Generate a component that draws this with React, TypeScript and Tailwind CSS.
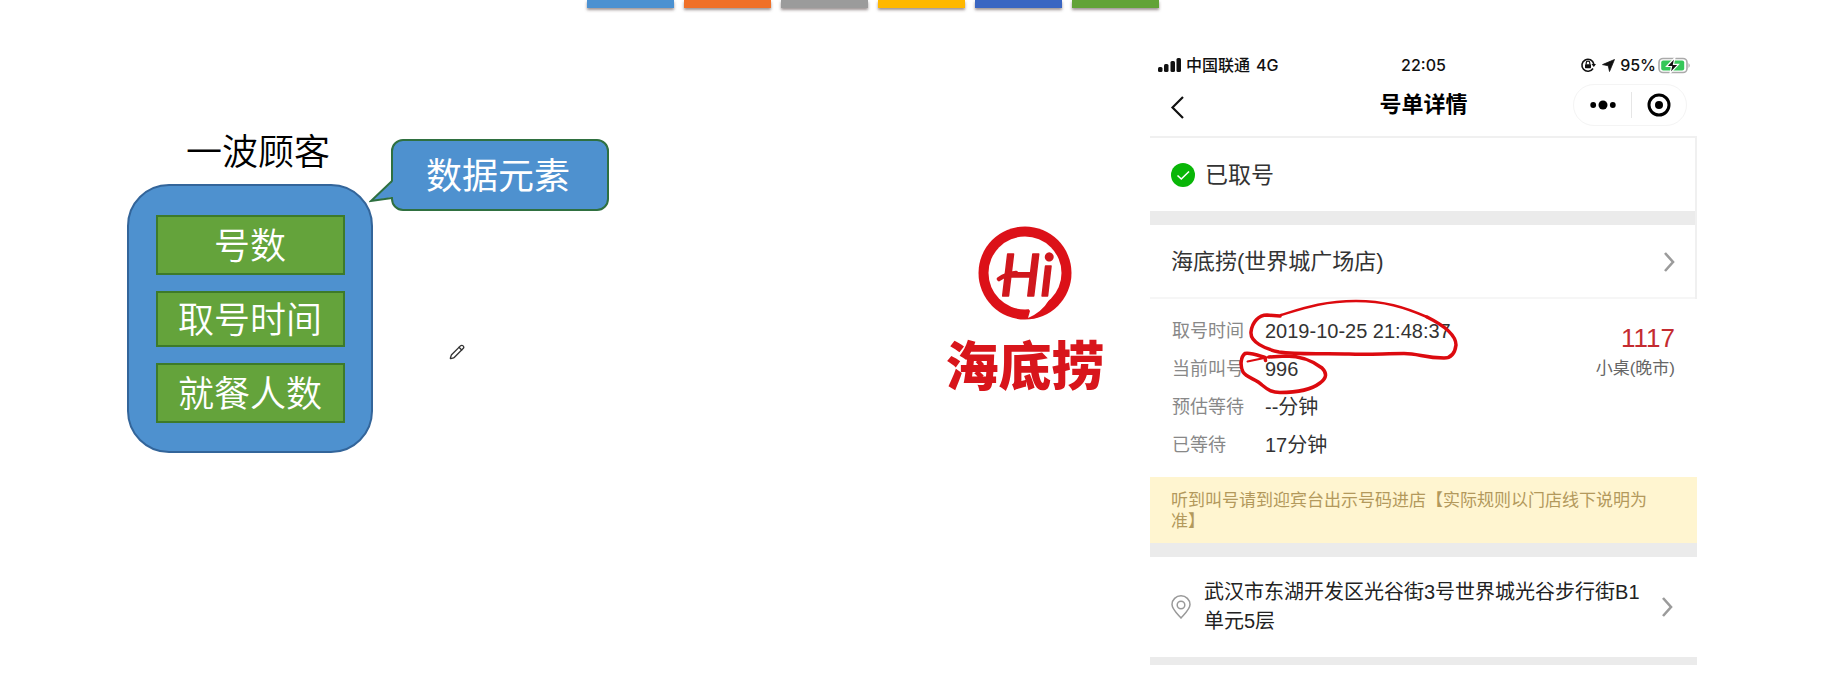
import React from "react";
import { Pencil } from "lucide-react";

const fields = [
  { name: "号数", height: "h-[60px]" },
  { name: "取号时间", height: "h-[56px]" },
  { name: "就餐人数", height: "h-[60px]" },
];

const details = [
  { label: "取号时间", value: "2019-10-25 21:48:37" },
  { label: "当前叫号", value: "996" },
  { label: "预估等待", value: "--分钟" },
  { label: "已等待", value: "17分钟" },
];

const tabColors = [
  "bg-[#4b91d1]",
  "bg-[#f07028]",
  "bg-[#9b9b9b]",
  "bg-[#ffb800]",
  "bg-[#3a66c2]",
  "bg-[#62a338]",
];

function ColorTabs() {
  return (
    <div className="flex gap-[10px] pl-[31.8%]">
      {tabColors.map((c) => (
        <div key={c} className={`h-2 w-[87px] shadow-[0_2px_3px_rgba(60,40,40,0.5)] ${c}`} />
      ))}
    </div>
  );
}

function Chevron() {
  return (
    <svg width="12" height="22" viewBox="0 0 12 22" fill="none" stroke="#9b9b9b" strokeWidth="2.6" className="shrink-0" aria-hidden="true">
      <path d="M2 2 L10 11 L2 20" />
    </svg>
  );
}

function ElementDiagram() {
  return (
    <section className="flex items-start pt-[115px] pl-[127px]">
      <div className="w-[246px]">
        <h2 className="pb-[9px] pl-4 text-center text-[36px] leading-[52px] font-[350] text-black">一波顾客</h2>
        <ul className="flex h-[269px] flex-col items-center gap-4 rounded-[42px] border-2 border-[#33659a] bg-[#4e91cf] pt-[29px]">
          {fields.map((f) => (
            <li
              key={f.name}
              className={`flex w-[189px] items-center justify-center border-2 border-[#3d7a2a] bg-[#64a33b] pb-1 text-[36px] leading-none font-[350] text-white ${f.height}`}
            >
              {f.name}
            </li>
          ))}
        </ul>
      </div>
      <div className="ml-[18px] pt-4">
        <div className="relative flex h-[72px] w-[218px] items-center justify-center rounded-[12px] border-2 border-[#2f7040] bg-[#4e91cf] pr-1 pb-1 text-[36px] leading-none text-white">
          数据元素
          <svg width="26" height="26" viewBox="0 0 26 26" className="absolute top-[38px] -left-[24px]" aria-hidden="true">
            <path d="M24 2 L2 22 L24 18 L26 18 L26 2 Z" fill="#4e91cf" />
            <path d="M23 2 L2 22 L23 19" fill="none" stroke="#2f7040" strokeWidth="2" />
          </svg>
        </div>
        <Pencil className="mt-[133px] ml-[58px] size-4 text-[#333]" strokeWidth={2} aria-hidden="true" />
      </div>
    </section>
  );
}

function Brand() {
  return (
    <section className="flex flex-col items-start pt-[218px] pl-[17px]">
      <div className="flex w-[156px] flex-col items-center text-[#d8151b]">
        <svg width="94" height="94" viewBox="0 0 94 94" aria-hidden="true">
          <circle cx="47" cy="47" r="46.5" fill="#dc1118" />
          <circle cx="47" cy="47" r="36.5" fill="#fff" />
          <path d="M50 82 L52 85 L50 92 Q64 86 71 74 L58 79 Z" fill="#fff" />
          <text x="22" y="70" fontFamily="Lato, sans-serif" fontStyle="italic" fontWeight="500" fontSize="57" fill="#d0171d" stroke="#d0171d" strokeWidth="1.500" strokeLinejoin="round">
            Hi
          </text>
          <path d="M21 53 Q28 48 38 47" fill="none" stroke="#d0171d" strokeWidth="4.500" strokeLinecap="round" />
        </svg>
        <h1 className="pt-[5px] text-[53px] leading-[76px] font-black whitespace-nowrap">海底捞</h1>
      </div>
    </section>
  );
}

function StatusBar() {
  return (
    <div className="grid h-[26px] grid-cols-[1fr_auto_1fr] items-center font-[Inter,'Noto_Sans_CJK_SC',sans-serif] text-[16px] leading-[26px] font-medium text-[#111]">
      <div className="flex items-center pl-[8px]">
        <svg width="24" height="16" viewBox="0 0 24 16" fill="#111" aria-hidden="true">
          <rect x="0" y="10" width="4.500" height="5" rx="1.500" />
          <rect x="6" y="7" width="4.500" height="8" rx="1.500" />
          <rect x="12.500" y="4" width="4.500" height="11" rx="1.500" />
          <rect x="18.500" y="1" width="4.500" height="14" rx="1.500" />
        </svg>
        <span className="ml-[4px]">中国联通</span>
        <span className="ml-[6px]">4G</span>
      </div>
      <time className="text-[16px]">22:05</time>
      <div className="flex items-center justify-end pr-[6px]">
        <svg width="16" height="16" viewBox="0 0 16 16" fill="none" stroke="#111" strokeWidth="1.600" aria-hidden="true">
          <path d="M13.800 7 A6 6 0 1 0 13 11.500" />
          <path d="M11.500 7 L16 7 L13.800 10 Z" fill="#111" stroke="none" />
          <rect x="5" y="7.200" width="6" height="4" rx="0.600" fill="#111" stroke="none" />
          <path d="M6.200 7.500 V6 A1.800 1.800 0 0 1 9.800 6 V7.500" strokeWidth="1.200" />
        </svg>
        <svg width="13" height="13" viewBox="0 0 13 13" className="ml-[6px]" aria-hidden="true">
          <path d="M12.500 0.500 L7.500 12.500 L6.300 6.800 L0.500 5.600 Z" fill="#111" stroke="#111" strokeWidth="0.800" strokeLinejoin="round" />
        </svg>
        <span className="ml-[5px]">95%</span>
        <svg width="33" height="17" viewBox="0 0 33 17" className="ml-[2px]" aria-hidden="true">
          <rect x="1" y="1.500" width="28" height="14" rx="4" fill="#fff" stroke="#aaa" strokeWidth="1.600" />
          <rect x="3.200" y="3.600" width="23" height="9.800" rx="2" fill="#35c759" />
          <path d="M30.500 6 Q33 8.500 30.500 11 Z" fill="#aaa" />
          <path d="M17 0.500 L8.500 9.500 H13.500 L12 16.500 L20.500 7.300 H15.500 Z" fill="#111" stroke="#fff" strokeWidth="1.200" />
        </svg>
      </div>
    </div>
  );
}

function NavBar() {
  return (
    <div className="grid h-[58px] grid-cols-[1fr_auto_1fr] items-center pb-[4px]">
      <button type="button" aria-label="返回" className="ml-[20px] w-4 pt-[4px]">
        <svg width="14" height="24" viewBox="0 0 14 24" fill="none" stroke="#111" strokeWidth="2.200">
          <path d="M13 2 L2.500 12.500 L13 23" />
        </svg>
      </button>
      <h2 className="text-[22px] leading-8 font-bold text-black">号单详情</h2>
      <div className="mr-[10px] flex h-[42px] w-[114px] items-center justify-self-end rounded-full border border-[#f4f4f4]">
        <button type="button" aria-label="更多" className="flex flex-1 justify-center pl-[2px]">
          <svg width="26" height="10" viewBox="0 0 26 10" fill="#000">
            <circle cx="3.200" cy="5" r="2.900" />
            <circle cx="13" cy="5" r="4.500" />
            <circle cx="22.800" cy="5" r="2.900" />
          </svg>
        </button>
        <span className="h-[26px] w-px bg-[#e6e6e6]" />
        <button type="button" aria-label="关闭" className="flex flex-1 justify-center">
          <svg width="24" height="24" viewBox="0 0 24 24">
            <circle cx="12" cy="12" r="10" fill="none" stroke="#000" strokeWidth="3" />
            <circle cx="12" cy="12" r="4" fill="#000" />
          </svg>
        </button>
      </div>
    </div>
  );
}

function InkMarks() {
  return (
    <svg width="220" height="100" viewBox="1240 298 220 100" fill="none" stroke="#dc0a0f" strokeLinecap="round" strokeLinejoin="round" className="pointer-events-none absolute top-0 left-[89px]" aria-hidden="true">
      <path d="M1282 314 C1305 307 1325 300 1357 300 C1385 300 1405 306 1428 316" strokeWidth="2.500" />
      <path d="M1428 316 C1446 325 1457 334 1457 344 C1456 352 1453 357 1445 357 C1425 357 1420 352.500 1405 352.500 C1385 352.500 1370 354 1350 353 C1325 352 1300 354 1280 351 C1266 348 1251 341 1252 331 C1253 321 1260 314 1268 314 L1281 315" strokeWidth="3.500" />
      <path d="M1248.500 360.500 L1270 356" strokeWidth="2" />
      <path d="M1266.500 359.500 L1266 356.500 C1258 354 1250 351 1246 352.500 C1241.500 356 1241 365 1244 371 C1248 377 1257 378 1263 384 C1269 389 1273 391.500 1281 391.500 C1300 391.500 1312 389 1321 382 C1328 377 1328 372 1323 367 C1314 360 1302 355 1287 355 L1270 356" strokeWidth="3.500" />
    </svg>
  );
}

function Phone() {
  return (
    <section className="pt-[44px] font-['Liberation_Sans','Noto_Sans_CJK_SC',sans-serif]">
      <StatusBar />
      <div className="h-[58px]">
        <NavBar />
      </div>
      <div className="border-t-2 border-r-2 border-[#f0f0f0]">
        <div className="flex h-[73px] items-center gap-[10px] pl-[21px]">
          <svg width="24" height="24" viewBox="0 0 24 24" aria-hidden="true">
            <circle cx="12" cy="12" r="12" fill="#09b607" />
            <path d="M6.500 12.500 L10.300 16 L18 8.500" fill="none" stroke="#fff" strokeWidth="1.600" />
          </svg>
          <span className="text-[23px] leading-8 text-[#333]">已取号</span>
        </div>
        <div className="h-[14px] bg-[#ebebeb]" />
        <a href="#store" className="flex h-[74px] items-center justify-between border-b-2 border-[#f6f6f6] pt-[2px] pr-[20px] pl-[21px] text-[22px] leading-8 text-[#333]">
          海底捞(世界城广场店)
          <Chevron />
        </a>
      </div>
      <div className="relative flex h-[178px] justify-between pt-[13px] pr-[22px] pl-[22px]">
        <dl>
          {details.map((d) => (
            <div key={d.label} className="flex h-[38px] items-center">
              <dt className="w-[93px] text-[18px] leading-[38px] text-[#888]">{d.label}</dt>
              <dd className="text-[20px] leading-[38px] text-[#333]">{d.value}</dd>
            </div>
          ))}
        </dl>
        <div className="pt-[8px] text-right">
          <p className="text-[26px] leading-[36px] text-[#c42b30]">1117</p>
          <p className="text-[17px] leading-[26px] text-[#666]">小桌(晚市)</p>
        </div>
        <InkMarks />
      </div>
      <p className="bg-[#fff5d0] pt-[13px] pr-[40px] pb-[11px] pl-[21px] text-[17px] leading-[21px] text-[#b3995c]">
        听到叫号请到迎宾台出示号码进店【实际规则以门店线下说明为准】
      </p>
      <div className="h-[14px] bg-[#ebebeb]" />
      <a href="#address" className="flex h-[100px] items-center justify-between pr-[24px] pl-[21px]">
        <svg width="20" height="24" viewBox="0 0 20 24" fill="none" stroke="#999" strokeWidth="1.500" className="shrink-0" aria-hidden="true">
          <path d="M10 23 C6 18.500 1 14 1 9.500 A9 8.700 0 0 1 19 9.500 C19 14 14 18.500 10 23 Z" />
          <circle cx="10" cy="10" r="3.800" />
        </svg>
        <span className="mr-auto ml-[13px] max-w-[448px] text-[20px] leading-[29px] text-[#222]">武汉市东湖开发区光谷街3号世界城光谷步行街B1单元5层</span>
        <Chevron />
      </a>
      <div className="h-2 bg-[#ebebeb]" />
    </section>
  );
}

export default function App() {
  return (
    <main className="min-h-screen overflow-hidden bg-white font-['Noto_Sans_CJK_SC',sans-serif]">
      <ColorTabs />
      <div className="grid grid-cols-[930fr_220fr_547fr_150fr]">
        <ElementDiagram />
        <Brand />
        <Phone />
      </div>
    </main>
  );
}
